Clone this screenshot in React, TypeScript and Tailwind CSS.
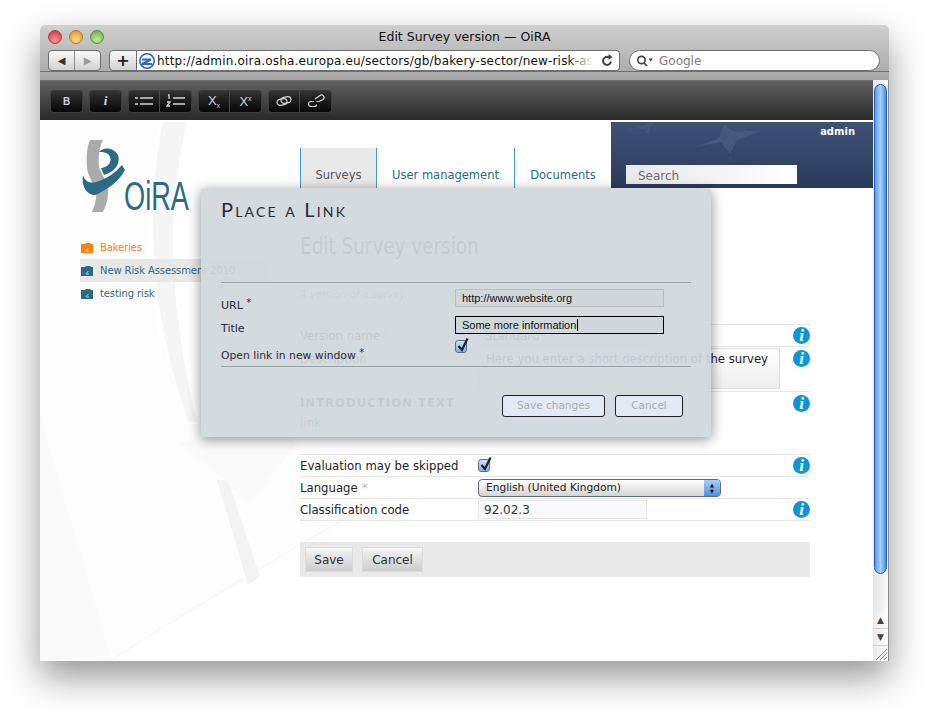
const uiFont = "font-['DejaVu_Sans',sans-serif]"

function InfoIcon() {
  return (
    <span className="flex h-[17px] w-[17px] items-center justify-center rounded-full bg-[#0b96dc] font-['Liberation_Serif',serif] text-[17px] font-bold italic leading-none text-white">
      i
    </span>
  )
}

function Check() {
  return (
    <span className="relative block h-[13px] w-[12px] rounded-[3px] border border-[#5a6f8f] bg-gradient-to-b from-[#cfe2f7] to-[#7fb0e6]">
      <svg viewBox="0 0 14 16" className="absolute -top-[4px] left-0 h-[16px] w-[14px]">
        <path d="M2.5 9 L6 13 L11.5 1.5" fill="none" stroke="#1b2230" strokeWidth="2.2" />
      </svg>
    </span>
  )
}

function ToolbarButton({ children, className = '' }: { children: React.ReactNode; className?: string }) {
  return (
    <span
      className={`flex h-[21px] w-[31px] items-center justify-center bg-gradient-to-b from-[#333333] to-[#070707] text-[#d4d4d4] ${className}`}
    >
      {children}
    </span>
  )
}

function Toolbar() {
  return (
    <div className="flex h-[40px] items-center gap-2 border-t border-[#6e6e6e] bg-gradient-to-b from-[#626262] to-[#2a2a2a] pl-[11px] pt-[1px]">
      <ToolbarButton className="w-[30px] rounded-[3px] shadow-[0_0_0_1px_#3c3c3c]">
        <span className="font-['Liberation_Sans',sans-serif] text-[10px] font-bold text-[#cfd6e6]">B</span>
      </ToolbarButton>
      <ToolbarButton className="w-[30px] rounded-[3px] shadow-[0_0_0_1px_#3c3c3c]">
        <span className="font-['Liberation_Serif',serif] text-[13px] font-bold italic text-[#cfd6e6]">i</span>
      </ToolbarButton>
      <div className="flex divide-x divide-[#4a4a4a] overflow-hidden rounded-[3px] shadow-[0_0_0_1px_#3c3c3c]">
        <ToolbarButton>
          <svg width="20" height="10" viewBox="0 0 20 10">
            <path d="M1 2h3M1 8h3M6 2h13M6 8h13" stroke="#d4d4d4" strokeWidth="1.4" />
          </svg>
        </ToolbarButton>
        <ToolbarButton>
          <svg width="20" height="14" viewBox="0 0 20 14">
            <path d="M2 1h1v4M1 8h3l-3 4h3M7 4h12M7 10h12" stroke="#d4d4d4" strokeWidth="1.3" fill="none" />
          </svg>
        </ToolbarButton>
      </div>
      <div className="flex divide-x divide-[#4a4a4a] overflow-hidden rounded-[3px] shadow-[0_0_0_1px_#3c3c3c]">
        <ToolbarButton>
          <span className="font-['Liberation_Sans',sans-serif] text-[13px] leading-none">
            X<span className="align-[-3px] text-[7px]">x</span>
          </span>
        </ToolbarButton>
        <ToolbarButton>
          <span className="font-['Liberation_Sans',sans-serif] text-[13px] leading-none">
            X<span className="align-[5px] text-[7px]">x</span>
          </span>
        </ToolbarButton>
      </div>
      <div className="flex divide-x divide-[#4a4a4a] overflow-hidden rounded-[3px] shadow-[0_0_0_1px_#3c3c3c]">
        <ToolbarButton>
          <svg width="16" height="10" viewBox="0 0 16 10" fill="none" stroke="#d4d4d4" strokeWidth="1.2">
            <rect x="1" y="3" width="10" height="6" rx="3" transform="rotate(-10 6 6)" />
            <rect x="5" y="1" width="10" height="6" rx="3" transform="rotate(-10 10 4)" />
          </svg>
        </ToolbarButton>
        <ToolbarButton>
          <svg width="18" height="14" viewBox="0 0 18 14" fill="none" stroke="#d4d4d4" strokeWidth="1.2">
            <path d="M8 5 L13 1.5 a2.5 2.5 0 0 1 3 4 L12 7.5 H9.5" />
            <path d="M7 7.5 H4 a2.5 2.5 0 0 0 0 5 h3.5 a2 2 0 0 0 2 -2" />
          </svg>
        </ToolbarButton>
      </div>
    </div>
  )
}

function BrowserChrome() {
  return (
    <div className={`h-[55px] bg-gradient-to-b from-[#d0d0d0] to-[#a6a6a6] ${uiFont}`}>
      <div className="relative flex h-[23px] items-center justify-center pt-[1px] text-[12.5px] text-[#111111]">
        <div className="absolute left-[8px] top-[5px] flex gap-[7px]">
          <span className="h-[14px] w-[14px] rounded-full border border-[#9c4a4a] bg-[radial-gradient(circle_at_50%_75%,#ff9a9a,#d8222a)]" />
          <span className="h-[14px] w-[14px] rounded-full border border-[#a27a3e] bg-[radial-gradient(circle_at_50%_75%,#ffdd88,#e08a1e)]" />
          <span className="h-[14px] w-[14px] rounded-full border border-[#5f8a45] bg-[radial-gradient(circle_at_50%_75%,#c5ec96,#62a83e)]" />
        </div>
        Edit Survey version — OiRA
      </div>
      <div className="flex h-[24px] items-center border-b border-[#6f6f6f] pb-[1px] pl-[8px] pr-[8px] pt-[3px]">
        <div className="flex h-[21px] w-[53px] overflow-hidden rounded-[4px] border border-[#6e6e6e] bg-gradient-to-b from-[#fafafa] to-[#d2d2d2]">
          <span className="flex flex-1 items-center justify-center border-r border-[#8a8a8a] text-[10px] text-[#333333]">◀</span>
          <span className="flex flex-1 items-center justify-center text-[10px] text-[#9a9a9a]">▶</span>
        </div>
        <span className="ml-[8px] flex h-[21px] w-[28px] items-center justify-center rounded-l-[4px] border border-[#6e6e6e] bg-gradient-to-b from-[#fafafa] to-[#d2d2d2] text-[16px] font-bold text-[#222222]">
          +
        </span>
        <div className="flex h-[21px] w-[483px] items-center rounded-r-[4px] border border-l-0 border-[#6e6e6e] bg-white pr-[6px] text-[12px]">
          <svg width="18" height="18" viewBox="0 0 18 18" className="ml-[1px] shrink-0">
            <circle cx="9" cy="9" r="7.2" fill="none" stroke="#2a66cc" strokeWidth="1.6" />
            <path d="M4 7.5 H13 L4 12 H14" fill="none" stroke="#2a66cc" strokeWidth="2" />
          </svg>
          <span className="relative ml-[1px] h-[16px] flex-1 overflow-hidden whitespace-nowrap leading-[16px] tracking-[0.18px] text-[#111111]">
            http://admin.oira.osha.europa.eu/sectors/gb/bakery-sector/new-risk-ass
            <span className="absolute inset-y-0 right-0 w-[24px] bg-gradient-to-r from-transparent to-white" />
          </span>
          <svg width="12" height="13" viewBox="0 0 12 13" className="ml-[8px] shrink-0" fill="none">
            <path d="M10 7.5 A4 4 0 1 1 7 3 H9" stroke="#444444" strokeWidth="2" />
            <path d="M7.5 0 L11.5 3 L7.5 6 Z" fill="#444444" />
          </svg>
        </div>
        <div className="ml-[9px] flex h-[21px] w-[251px] items-center rounded-full border border-[#6e6e6e] bg-white pl-[6px] text-[12px] text-[#7d7d7d]">
          <svg width="18" height="12" viewBox="0 0 18 12" fill="none" stroke="#444444" strokeWidth="1.7">
            <circle cx="5.5" cy="5" r="3.7" />
            <path d="M8 8 L11 11" />
            <path d="M12.5 3.5 H17 L14.75 6.5 Z" fill="#444444" stroke="none" />
          </svg>
          <span className="ml-[5px]">Google</span>
        </div>
      </div>
    </div>
  )
}

function Logo() {
  return (
    <div className="flex h-[76px] w-[110px] items-end">
      <svg width="48" height="76" viewBox="0 0 48 76" className="shrink-0">
        <path d="M9 3 L22 3 C18 10 17 22 18 30 C22 40 28 48 27 56 C27 64 24 70 22 75 L11 75 C13 70 16 62 15 56 C13 46 6 38 6 30 C5 20 6 10 9 3 Z" fill="#ababab" />
        <path d="M18 15 C22 10 32 10 37 18 C40 26 34 35 23 38 L20 31 C28 30 31 24 29 20 C27 15 22 15 18 15 Z" fill="#2b6a85" />
        <path d="M44 33 C38 44 28 52 14 58 C6 58 0 50 2 38 C4 44 8 47 15 45 C26 42 35 35 41 28 Z" fill="#2b6a85" />
      </svg>
      <span className="-ml-[5px] -mb-[3px] inline-block origin-left scale-x-[0.68] font-['Liberation_Sans',sans-serif] text-[40px] leading-[40px] text-[#2b6a85]">
        OiRA
      </span>
    </div>
  )
}

function SideItem({ label, active, orange }: { label: string; active?: boolean; orange?: boolean }) {
  return (
    <div className={`flex h-[23px] w-[190px] items-center pl-[1px] ${active ? 'bg-[#e8e8e8]' : ''}`}>
      <svg width="12" height="10" viewBox="0 0 12 10" className="shrink-0">
        <path d="M0 1 H4 L5 0 H9 L10 1 H12 V10 H0 Z" fill={orange ? '#ff7f0e' : '#2b6a85'} />
        <path d="M5 7.5 L7.5 5 M5 8 H8" stroke="#ffffff" strokeWidth="0.7" />
      </svg>
      <span className={`ml-[7px] whitespace-nowrap text-[10px] tracking-[-0.1px] ${orange ? 'text-[#ff7f0e]' : 'text-[#2b6a85]'}`}>
        {label}
      </span>
    </div>
  )
}

function Row({ label, required, info, children }: { label: string; required?: boolean; info?: boolean; children?: React.ReactNode }) {
  return (
    <div className="flex h-[22px] items-center border-b border-[#e6e6e6]">
      <span className="w-[178px] pt-[2px] text-[11.7px] text-[#222222]">
        {label}
        {required && <span className="ml-[4px] text-[#bbbbbb]">*</span>}
      </span>
      <div className="flex-1">{children}</div>
      {info && <InfoIcon />}
    </div>
  )
}

function Background() {
  return (
    <svg className="pointer-events-none absolute inset-0 h-full w-full" viewBox="0 0 833 539">
      <path d="M0 0 H120 C95 120 105 240 180 340 L210 380 L257 321 L300 408 C240 440 130 500 70 539 H0 Z" fill="#fdfdfd" />
      <path d="M0 295 L70 533 L0 539 Z" fill="#fafafa" />
      <path d="M123 0 H147 C125 90 130 190 157 300 L149 300 C112 200 104 90 123 0 Z" fill="#f5f5f5" />
      <path d="M177 358 L208 463 L220 455 L188 358 Z" fill="#f3f3f3" />
      <path d="M140 321 L210 380 L257 321 L220 300 Z" fill="#fafafa" />
      <path d="M70 539 C130 500 230 440 333 380" stroke="#f4f4f4" strokeWidth="1" fill="none" />
    </svg>
  )
}

function PlaceLinkDialog() {
  return (
    <div className={`absolute left-[161px] top-[67px] flex h-[248px] w-[510px] flex-col bg-[#d0d8dc]/92 px-[20px] text-[#2a2a3a] shadow-[0_2px_12px_rgba(0,0,0,0.45)] ${uiFont}`}>
      <h2 className="mt-[9px] h-[85px] border-b border-[#9aa4ab] font-['Lato',sans-serif] text-[20px] leading-[22px] tracking-[2.2px] [font-variant:small-caps]">
        Place a Link
      </h2>
      <div className="flex h-[84px] flex-col border-b border-[#9aa4ab] text-[11px]">
        <div className="mt-[6px] flex h-[18px] items-center">
          <span className="w-[234px] pt-[14px]">
            URL <span className="align-[3px] text-[10px]">*</span>
          </span>
          <span className="flex h-[18px] w-[209px] items-center border border-[#b8bec2] bg-[#d0d8dc] pl-[6px] font-['Liberation_Sans',sans-serif] text-[#111111]">
            http://www.website.org
          </span>
        </div>
        <div className="mt-[9px] flex h-[18px] items-center">
          <span className="w-[234px] pt-[8px]">Title</span>
          <span className="flex h-[18px] w-[209px] items-center border border-black bg-[#d0d8dc] pl-[6px] font-['Liberation_Sans',sans-serif] text-[#111111]">
            Some more information
            <span className="ml-[1px] h-[12px] w-px bg-black" />
          </span>
        </div>
        <div className="mt-[4px] flex h-[16px] items-center">
          <span className="w-[234px] whitespace-nowrap pt-[18px] text-[10.8px]">
            Open link in new window <span className="align-[3px] text-[10px]">*</span>
          </span>
          <Check />
        </div>
      </div>
      <div className="mt-[28px] flex justify-end gap-[10px] pr-[8px] text-[10.5px] text-[#a7adb1]">
        <span className="flex h-[22px] w-[103px] items-center justify-center rounded-[3px] border border-[#222222] bg-[#e3eaf6]">Save changes</span>
        <span className="flex h-[22px] w-[68px] items-center justify-center rounded-[3px] border border-[#222222] bg-[#e3eaf6]">Cancel</span>
      </div>
    </div>
  )
}

export default function App() {
  return (
    <div className="h-[716px] w-[928px] overflow-hidden bg-white pl-[40px] pt-[25px]">
      <div className={`flex h-[636px] w-[849px] flex-col overflow-hidden rounded-t-[5px] bg-white shadow-[0_16px_36px_rgba(0,0,0,0.42)] ${uiFont}`}>
        <BrowserChrome />
        <div className="flex min-h-0 flex-1">
          <div className="flex w-[833px] flex-col">
            <Toolbar />
            <div className="relative flex-1 border-t-[2px] border-white bg-white">
              <Background />
              <div className="relative flex">
                <aside className="w-[260px] shrink-0 pl-[41px]">
                  <div className="pt-[15px]">
                    <Logo />
                  </div>
                  <div className="mt-[23px] -ml-[1px] flex flex-col">
                    <SideItem label="Bakeries" orange />
                    <SideItem label="New Risk Assessment 2010" active />
                    <SideItem label="testing risk" />
                  </div>
                </aside>
                <div className="min-w-0 flex-1">
                  <header className="flex h-[66px] items-start justify-between">
                    <nav className="mt-[26px] flex h-[40px] pt-0 text-[11.5px] text-[#2b6a85]">
                      <span className="flex w-[77px] items-center justify-center border-x border-[#3f9cc4] bg-[#e9e9e9] pt-[15px] text-[#555555]">Surveys</span>
                      <span className="flex w-[138px] items-center justify-center border-r border-[#3f9cc4] pt-[15px]">User management</span>
                      <span className="flex w-[96px] items-center justify-center pt-[15px]">Documents</span>
                    </nav>
                    <div className="relative h-[66px] w-[262px] overflow-hidden bg-gradient-to-b from-[#3f5275] to-[#2a3a5c]">
                      <svg className="absolute inset-0" width="262" height="66" viewBox="0 0 262 66" fill="#4c5f80">
                        <path d="M16 8 L32 4 L38 0 L45 0 L40 4 L37 12 L33 7 Z" opacity="0.6" />
                        <path d="M85 25 L108 16 L113 3 L122 9 L150 9 L126 18 L119 32 L110 20 Z" opacity="0.7" />
                      </svg>
                      <span className="absolute right-[18px] top-[2px] text-[10px] font-bold text-white">admin</span>
                      <div className="absolute left-[15px] top-[43px] flex h-[19px] w-[171px] items-center bg-gradient-to-r from-[#e9e9e9] to-white pl-[12px] pt-[2px] text-[12px] text-[#6d6d6d]">
                        Search
                      </div>
                    </div>
                  </header>
                  <main className="w-[510px]">
                    <h1 className="mt-[43px] inline-block origin-left scale-x-[0.8] whitespace-nowrap text-[23px] leading-[30px] text-[#444444]">
                      Edit Survey version
                    </h1>
                    <p className="mt-[27px] text-[10px] italic leading-[14px] text-[#777777]">A version of a survey.</p>
                    <div className="mt-[22px] border-t border-[#e6e6e6]">
                      <Row label="Version name" required info>
                        <span className="flex h-[19px] w-[169px] items-center border border-[#e6e6e6] pl-[6px] text-[12px] text-[#333333]">Standard</span>
                      </Row>
                      <div className="flex h-[45px] border-b border-[#e6e6e6] pt-[1px]">
                        <span className="w-[178px] pt-[3px] text-[11.7px] text-[#222222]">Description</span>
                        <span className="h-[41px] w-[302px] whitespace-nowrap border border-[#dddddd] bg-gradient-to-b from-white to-[#eeeeee] pl-[7px] pt-[2px] text-[11.7px] text-[#222222]">
                          Here you enter a short description of the survey
                        </span>
                        <span className="ml-[13px] mt-[2px]">
                          <InfoIcon />
                        </span>
                      </div>
                      <div className="flex h-[62px] items-start justify-between pt-[3px]">
                        <div>
                          <div className="text-[11.7px] font-bold tracking-[1px] text-[#444444]">INTRODUCTION TEXT</div>
                          <div className="mt-[1px] text-[12px] text-[#555555]">link</div>
                        </div>
                        <InfoIcon />
                      </div>
                      <div className="border-t border-[#e6e6e6]">
                        <Row label="Evaluation may be skipped" info>
                          <Check />
                        </Row>
                        <Row label="Language" required>
                          <span className="flex h-[18px] w-[243px] items-center justify-between overflow-hidden rounded-[4px] border border-[#5d6a7e] bg-gradient-to-b from-[#ffffff] to-[#d5d5d5] pl-[7px] text-[10.6px] text-[#222222]">
                            English (United Kingdom)
                            <span className="flex h-full w-[16px] flex-col items-center justify-center bg-gradient-to-b from-[#a9cdf5] to-[#4d8fe0] text-[5px] leading-[6px] text-black">
                              <span>▲</span>
                              <span>▼</span>
                            </span>
                          </span>
                        </Row>
                        <Row label="Classification code" info>
                          <span className="flex h-[19px] w-[169px] items-center border border-[#e6e6e6] bg-[#fafafa] pl-[5px] text-[12px] text-[#333333]">92.02.3</span>
                        </Row>
                      </div>
                    </div>
                    <div className="mt-[21px] flex h-[35px] items-center gap-[9px] bg-[#e9e9e9] pl-[5px] text-[12px] text-[#333333]">
                      <span className="flex h-[25px] w-[48px] items-center justify-center border border-[#dcdcdc] bg-gradient-to-b from-[#f4f4f4] to-[#cdcdcd]">Save</span>
                      <span className="flex h-[25px] w-[61px] items-center justify-center border border-[#dcdcdc] bg-gradient-to-b from-[#f4f4f4] to-[#cdcdcd]">Cancel</span>
                    </div>
                  </main>
                </div>
              </div>
              <PlaceLinkDialog />
            </div>
          </div>
          <div className="flex w-[16px] flex-col border-r border-[#8a8a8a] bg-gradient-to-r from-[#e8e8e8] to-white">
            <div className="mx-[1px] mt-[4px] h-[490px] shrink-0 rounded-full border border-[#1f5fb8] bg-gradient-to-r from-[#5b9ae8] via-[#a8d0fa] to-[#4b8ce0]" />
            <div className="flex-1 rounded-b-full bg-gradient-to-r from-[#e4e4e4] to-[#fbfbfb]" />
            <div className="flex h-[17px] items-center justify-center border-b border-[#cfcfcf] text-[9px] leading-none text-[#444444]">▲</div>
            <div className="flex h-[17px] items-center justify-center border-b border-[#cfcfcf] text-[9px] leading-none text-[#444444]">▼</div>
            <svg width="15" height="15" viewBox="0 0 15 15" className="shrink-0" stroke="#8a8a8a" strokeWidth="1">
              <path d="M3 14 L14 3 M7 14 L14 7 M11 14 L14 11" />
            </svg>
          </div>
        </div>
      </div>
    </div>
  )
}
